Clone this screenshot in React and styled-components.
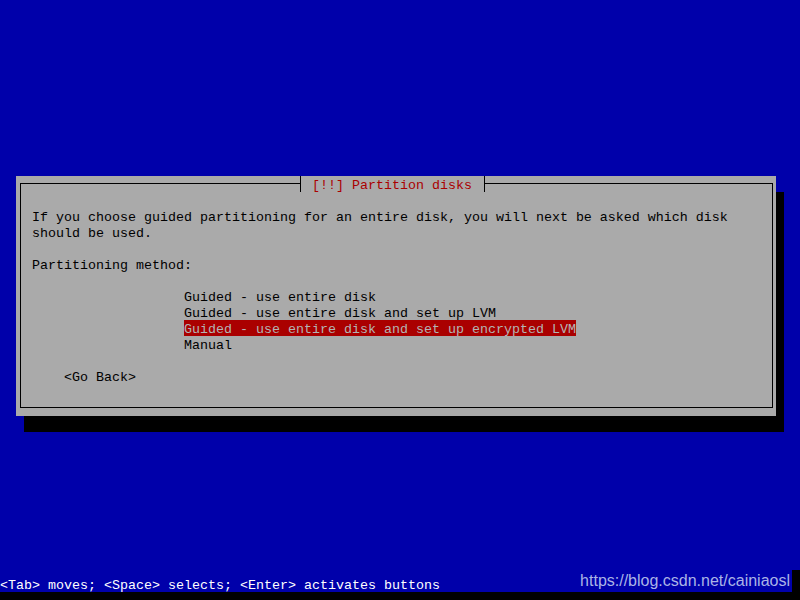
import React from "react";
import styled, { createGlobalStyle } from "styled-components";

const Global = createGlobalStyle`
  html, body { margin: 0; padding: 0; background: #000000; }
  body { width: 800px; height: 600px; overflow: hidden; }
`;

const MONO = `"Liberation Mono", "DejaVu Sans Mono", monospace`;

const Screen = styled.div`
  width: 800px;
  height: 592px;
  background: #0000aa;
  display: flex;
  flex-direction: column;
  padding-top: 176px;
  box-sizing: border-box;
  font-family: ${MONO};
  font-size: 13.333px;
  line-height: 16px;
`;

const Dialog = styled.div`
  position: relative;
  margin-left: 16px;
  width: 760px;
  height: 240px;
  background: #aaaaaa;
  box-shadow: 8px 16px 0 0 #000000;
  display: flex;
`;

const Frame = styled.div`
  flex: 1;
  margin: 7px 3px 8px 4px;
  border: 1px solid #000000;
  padding: 24px 0 0 11px;
  display: flex;
  flex-direction: column;
  color: #000000;
`;

const Title = styled.div`
  position: absolute;
  top: 0;
  left: 284px;
  height: 16px;
  box-sizing: border-box;
  padding: 2px 4px 0 3px;
  border-left: 1px solid #000000;
  border-right: 1px solid #000000;
  background: #aaaaaa;
  color: #aa0000;
  white-space: pre;
`;

const Line = styled.div`
  height: 16px;
  box-sizing: border-box;
  padding-top: 2px;
  white-space: pre;
  padding-left: ${(p) => p.$indent || 0}px;
`;

const Options = styled.div`
  display: flex;
  flex-direction: column;
  align-items: flex-start;
  padding-left: 152px;
`;

const Option = styled.div`
  height: 16px;
  box-sizing: border-box;
  padding-top: 2px;
  white-space: pre;
  background: ${(p) => (p.$selected ? "#aa0000" : "transparent")};
  color: ${(p) => (p.$selected ? "#b4b4b4" : "#000000")};
`;

const HelpBar = styled.div`
  margin-top: auto;
  height: 16px;
  display: flex;
  align-items: stretch;
`;

const HelpText = styled.div`
  color: #ffffff;
  white-space: pre;
  box-sizing: border-box;
  padding-top: 2px;
`;

const Watermark = styled.div`
  margin-left: auto;
  margin-right: 2px;
  font-family: "Liberation Sans", Arial, sans-serif;
  font-size: 16px;
  line-height: 16px;
  color: #aab4e6;
  white-space: pre;
  margin-top: -3px;
`;

const Corner = styled.div`
  width: 8px;
  background: #000000;
  margin-top: -6px;
`;

const options = [
  "Guided - use entire disk",
  "Guided - use entire disk and set up LVM",
  "Guided - use entire disk and set up encrypted LVM",
  "Manual",
];

export default function App() {
  return (
    <>
      <Global />
      <Screen>
        <Dialog>
          <Title> [!!] Partition disks </Title>
          <Frame>
            <Line>If you choose guided partitioning for an entire disk, you will next be asked which disk</Line>
            <Line>should be used.</Line>
            <Line> </Line>
            <Line>Partitioning method:</Line>
            <Line> </Line>
            <Options>
              {options.map((o, i) => (
                <Option key={o} $selected={i === 2}>{o}</Option>
              ))}
            </Options>
            <Line> </Line>
            <Line $indent={32}>&lt;Go Back&gt;</Line>
          </Frame>
        </Dialog>
        <HelpBar>
          <HelpText>&lt;Tab&gt; moves; &lt;Space&gt; selects; &lt;Enter&gt; activates buttons</HelpText>
          <Watermark>https://blog.csdn.net/cainiaosl</Watermark>
          <Corner />
        </HelpBar>
      </Screen>
    </>
  );
}
